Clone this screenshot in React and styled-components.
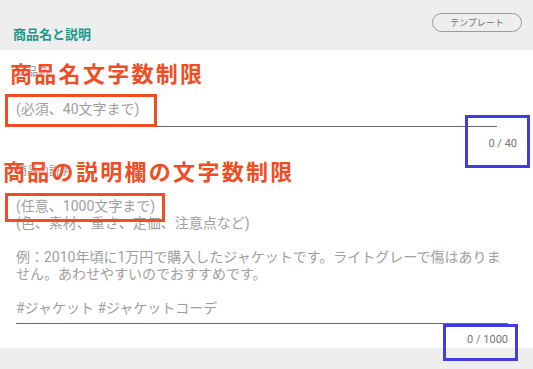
import React from "react";
import styled, { createGlobalStyle } from "styled-components";

const GlobalStyle = createGlobalStyle`
  html, body { margin: 0; padding: 0; background: #eeeeee; }
  body { font-family: Roboto, "Noto Sans CJK JP", sans-serif; }
  * { box-sizing: border-box; }
`;

const Page = styled.div`
  width: 533px;
  height: 369px;
  background: #eeeeee;
  display: flex;
  flex-direction: column;
`;

const Header = styled.header`
  height: 50px;
  flex: none;
  display: flex;
  justify-content: space-between;
  align-items: flex-start;
  padding: 13px 11px 0 13px;
`;

const Title = styled.h2`
  margin: 14px 0 0;
  font-size: 13px;
  line-height: 16px;
  font-weight: 700;
  color: #1d978a;
`;

const TemplateButton = styled.button`
  width: 90px;
  height: 19px;
  border: 1px solid #9b9b9b;
  border-radius: 10px;
  background: transparent;
  color: #6f6f6f;
  font-family: Roboto, "Noto Sans CJK JP", sans-serif;
  font-size: 9px;
  padding: 0;
  display: flex;
  align-items: center;
  justify-content: center;
`;

const Main = styled.main`
  position: relative;
  height: 298px;
  flex: none;
  background: #ffffff;
  display: flex;
  flex-direction: column;
  padding-left: 16px;
`;

const Label = styled.div`
  margin-top: ${(p) => p.$top}px;
  font-size: 11px;
  line-height: 13px;
  color: #8a8a8a;
`;

const Input = styled.div`
  margin-top: ${(p) => p.$top}px;
  width: ${(p) => p.$width}px;
  padding-bottom: ${(p) => p.$pad}px;
  border-bottom: 1px solid #6a6a6a;
  font-size: 14px;
  line-height: 17px;
  color: #9e9e9e;
  white-space: pre-line;
`;

const Counter = styled.div`
  margin-top: ${(p) => p.$top}px;
  width: ${(p) => p.$width}px;
  text-align: right;
  font-size: 11px;
  line-height: 13px;
  color: #757575;
`;

const Note = styled.div`
  position: absolute;
  left: ${(p) => p.$left}px;
  top: ${(p) => p.$top}px;
  font-family: "Noto Sans CJK JP", sans-serif;
  font-size: 22px;
  line-height: 26px;
  font-weight: 700;
  letter-spacing: 2.3px;
  color: #ef4d24;
  text-shadow: 0 0 1px #fff, 0 0 1px #fff;
  white-space: nowrap;
`;

const Frame = styled.div`
  position: absolute;
  left: ${(p) => p.$left}px;
  top: ${(p) => p.$top}px;
  width: ${(p) => p.$w}px;
  height: ${(p) => p.$h}px;
  border: ${(p) => (p.$blue ? "3px solid #3d3de3" : "3px solid #ef4d24")};
`;

const descPlaceholder = `(任意、1000文字まで)
(色、素材、重さ、定価、注意点など)

例：2010年頃に1万円で購入したジャケットです。ライトグレーで傷はありま
せん。あわせやすいのでおすすめです。

#ジャケット #ジャケットコーデ`;

export default function App() {
  return (
    <>
      <GlobalStyle />
      <Page>
        <Header>
          <Title>商品名と説明</Title>
          <TemplateButton>テンプレート</TemplateButton>
        </Header>
        <Main>
          <Label $top={16}>商品名</Label>
          <Input $top={22} $width={481} $pad={8}>(必須、40文字まで)</Input>
          <Counter $top={10} $width={501}>0 / 40</Counter>
          <Label $top={15}>商品の説明</Label>
          <Input $top={20} $width={492} $pad={6}>{descPlaceholder}</Input>
          <Counter $top={9} $width={492}>0 / 1000</Counter>

          <Note $left={10} $top={9}>商品名文字数制限</Note>
          <Note $left={3} $top={107}>商品の説明欄の文字数制限</Note>
          <Frame $left={5} $top={44} $w={152} $h={33} />
          <Frame $left={5} $top={143} $w={160} $h={29} />
          <Frame $blue $left={465} $top={65} $w={65} $h={53} />
          <Frame $blue $left={443} $top={274} $w={75} $h={37} />
        </Main>
      </Page>
    </>
  );
}
